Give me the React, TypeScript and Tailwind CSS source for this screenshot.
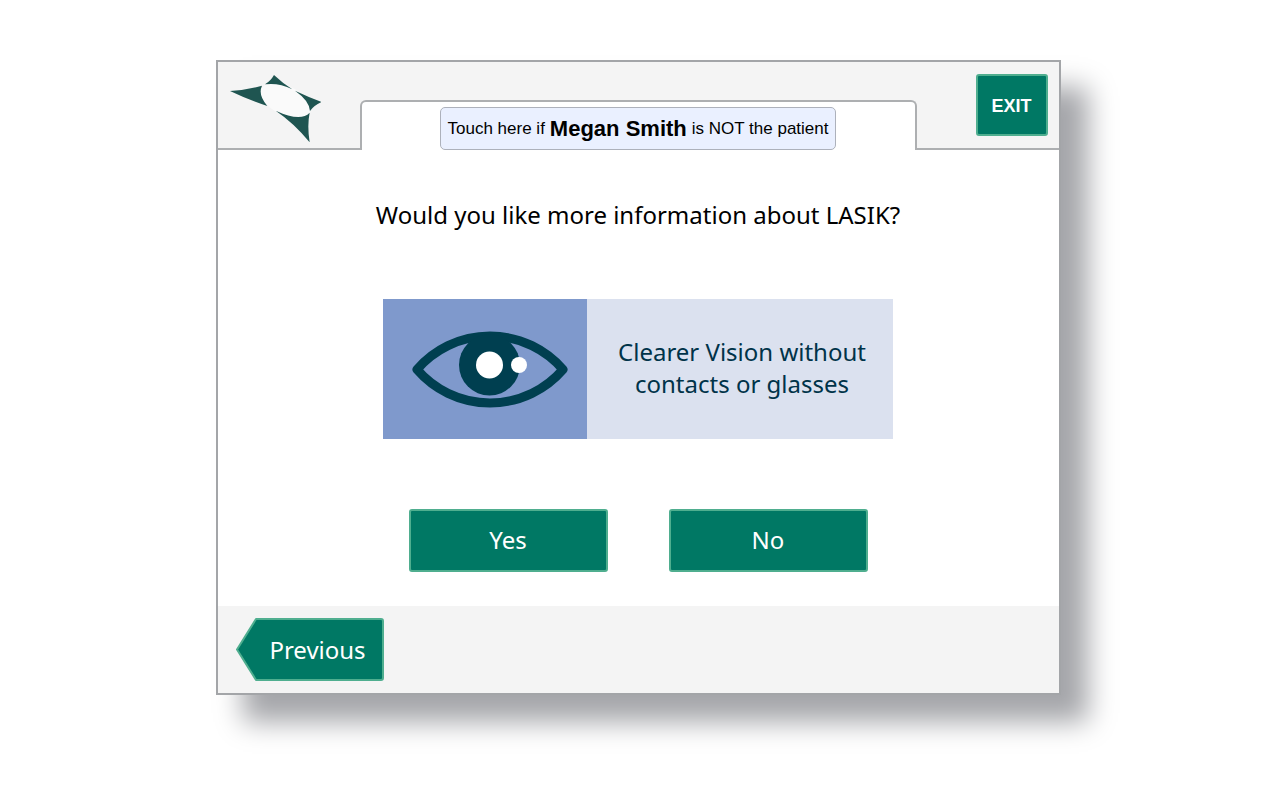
const greenButton =
  'flex items-center justify-center rounded-[3px] border-2 border-[#4fae8f] bg-[#007864] text-white hover:bg-[#006a58]';

function Logo() {
  return (
    <svg viewBox="60 74 273 202" className="ml-3 mt-[13px] w-[91px]" role="img" aria-label="Logo">
      <ellipse cx="226" cy="150" rx="80" ry="43" transform="rotate(25 226 150)" fill="#fafafa" />
      <g fill="#1f5551">
        <path d="M60 122Q113 119 156 106Q143 134 172 167Q112 147 60 122Z" />
        <path d="M192 74Q182 92 165 102Q205 96 247 117Q217 98 192 74Z" />
        <path d="M255 121Q295 140 335 155Q313 164 300 182Q298 151 255 121Z" />
        <path d="M197 181Q272 216 299 187Q291 225 299 276Q253 219 197 181Z" />
      </g>
    </svg>
  );
}

function EyeIcon() {
  return (
    <svg viewBox="0 0 156 77" className="mr-[-10px] w-[156px]" aria-hidden="true">
      <path
        d="M5 38.5A96.4 96.4 0 0 1 151 38.5A96.4 96.4 0 0 1 5 38.5Z"
        fill="none"
        stroke="#003f50"
        strokeWidth="9"
        strokeLinejoin="round"
      />
      <circle cx="77.5" cy="34" r="30.5" fill="#003f50" />
      <circle cx="77.5" cy="34" r="13.5" fill="#fff" />
      <circle cx="107" cy="34" r="8" fill="#fff" />
    </svg>
  );
}

export default function App() {
  return (
    <div className="min-h-screen bg-white py-[60px] pr-5 pl-4 font-['Noto_Sans','Open_Sans',sans-serif]">
      <div className="mx-auto flex max-w-[845px] flex-col border-2 border-[#a3a5a8] bg-white shadow-[27px_27px_26px_#a5a6aa]">
        {/* Header with the patient tab */}
        <header className="flex h-[88px] bg-[#f4f4f4] font-['Liberation_Sans',sans-serif]">
          <div className="w-[142px] shrink-0 border-b-2 border-[#adafb1]">
            <Logo />
          </div>
          <div className="mt-[38px] flex flex-1 items-end justify-center rounded-t-md border-2 border-b-0 border-[#adafb1] bg-white">
            <button
              type="button"
              className="flex h-[43px] items-center gap-[5px] rounded-[5px] border border-[#adb1bb] bg-[#eaf0ff] px-[7px] text-[17px] whitespace-nowrap text-black"
            >
              <span>Touch here if</span>
              <strong className="text-[22px] leading-none">Megan Smith</strong>
              <span>is NOT the patient</span>
            </button>
          </div>
          <div className="flex w-[142px] shrink-0 justify-end border-b-2 border-[#adafb1] pt-3 pr-[11px]">
            <button type="button" className={`${greenButton} h-[62px] w-[72px] pt-0.5 text-lg font-bold`}>
              EXIT
            </button>
          </div>
        </header>

        {/* Question */}
        <main className="flex flex-col items-center px-4 pt-[47px] pb-[34px]">
          <h1 className="text-center text-2xl leading-9 text-black">
            Would you like more information about LASIK?
          </h1>

          <section className="mt-[66px] flex h-[140px] w-full max-w-[510px]">
            <div className="flex w-2/5 items-center justify-center bg-[#7f99cc]">
              <EyeIcon />
            </div>
            <p className="flex w-3/5 items-center justify-center bg-[#dbe1ef] pb-0.5 pl-1 text-center text-2xl leading-8 text-[#003349]">
              Clearer Vision without
              <br />
              contacts or glasses
            </p>
          </section>

          <div className="mt-[70px] flex gap-[61px]">
            <button type="button" className={`${greenButton} h-[63px] w-[199px] pb-0.5 text-2xl`}>
              Yes
            </button>
            <button type="button" className={`${greenButton} h-[63px] w-[199px] pb-0.5 text-2xl`}>
              No
            </button>
          </div>
        </main>

        <footer className="flex h-[87px] items-center bg-[#f4f4f4] px-[18px]">
          <button type="button" className="relative isolate h-[63px] w-[148px] pl-4 text-2xl text-white">
            <svg viewBox="0 0 148 63" className="absolute inset-0 -z-10 h-full w-full" aria-hidden="true">
              <path
                d="M20 1H145Q147 1 147 3V60Q147 62 145 62H20L1 31.5Z"
                fill="#007864"
                stroke="#4fae8f"
                strokeWidth="2"
                strokeLinejoin="round"
              />
            </svg>
            Previous
          </button>
        </footer>
      </div>
    </div>
  );
}
